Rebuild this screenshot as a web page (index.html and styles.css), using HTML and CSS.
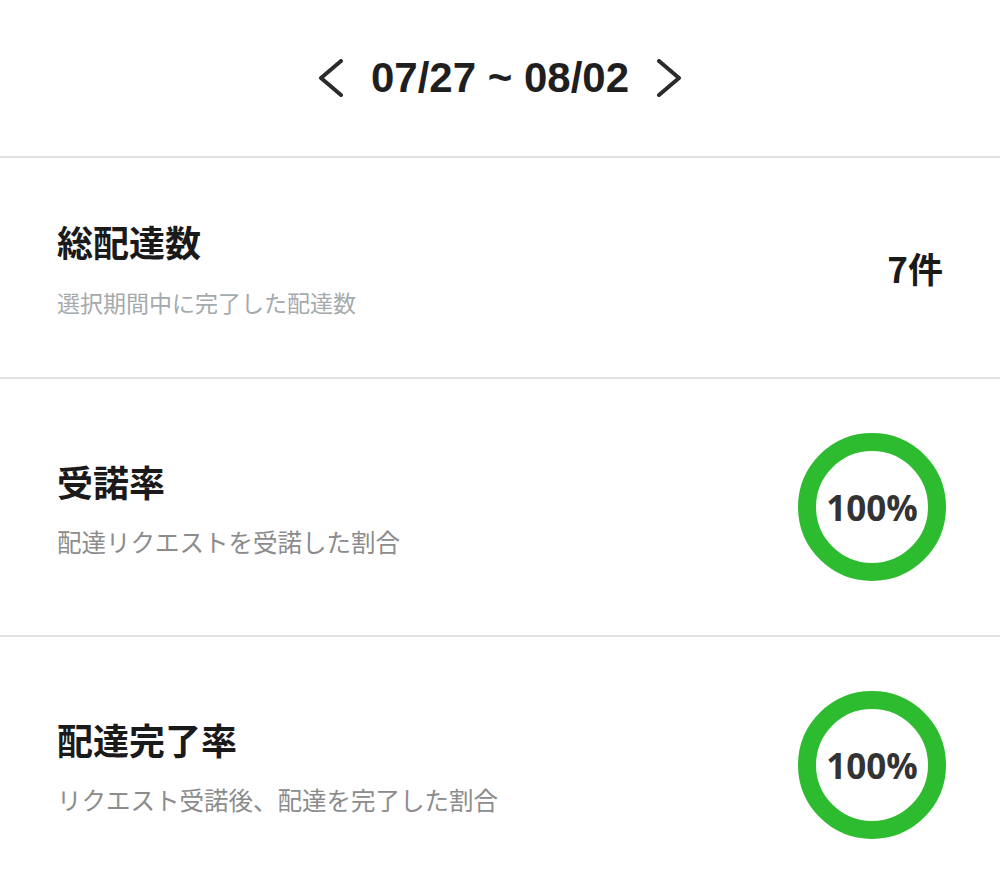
FILE: index.html
```html
<!DOCTYPE html>
<html lang="ja">
<head>
<meta charset="utf-8">
<link rel="stylesheet" href="styles.css">
</head>
<body>
<header class="period">
  <svg class="chev" width="26" height="38" viewBox="0 0 26 38"><polyline points="23,2 3,19 23,36" fill="none" stroke="#2b2b2b" stroke-width="4" stroke-linecap="round" stroke-linejoin="round"/></svg>
  <span class="range">07/27 ~ 08/02</span>
  <svg class="chev" width="26" height="38" viewBox="0 0 26 38"><polyline points="3,2 23,19 3,36" fill="none" stroke="#2b2b2b" stroke-width="4" stroke-linecap="round" stroke-linejoin="round"/></svg>
</header>
<section class="row row-first">
  <div class="text">
    <div class="title">総配達数</div>
    <div class="sub sub-light">選択期間中に完了した配達数</div>
  </div>
  <div class="count">7件</div>
</section>
<section class="row row-ring">
  <div class="text">
    <div class="title">受諾率</div>
    <div class="sub">配達リクエストを受諾した割合</div>
  </div>
  <div class="ring">100%</div>
</section>
<section class="row row-ring row-last">
  <div class="text">
    <div class="title">配達完了率</div>
    <div class="sub">リクエスト受諾後、配達を完了した割合</div>
  </div>
  <div class="ring">100%</div>
</section>
</body>
</html>
```
FILE: styles.css
```css
html, body {
  margin: 0;
  padding: 0;
  background: #ffffff;
}
body {
  font-family: "Noto Sans CJK JP", "Noto Sans", sans-serif;
  color: #1a1a1a;
}
.period {
  height: 156px;
  display: flex;
  align-items: center;
  justify-content: center;
  gap: 27px;
  border-bottom: 2px solid #e2e2e2;
}
.chev {
  display: block;
}
.range {
  font-family: "Liberation Sans", Arial, sans-serif;
  font-weight: 700;
  font-size: 42px;
  color: #1f1f1f;
  line-height: 1;
}
.row {
  display: flex;
  align-items: center;
  justify-content: space-between;
  padding: 0 54px 0 57px;
  border-bottom: 2px solid #e2e2e2;
}
.row-first {
  height: 219px;
}
.row-ring {
  height: 256px;
}
.row-last {
  border-bottom: none;
}
.title {
  font-size: 36px;
  font-weight: 700;
  line-height: 50px;
  color: #1a1a1a;
}
.sub {
  margin-top: 19px;
  font-size: 24.5px;
  line-height: 34px;
  color: #8c8c8c;
}
.sub-light {
  font-size: 23px;
  color: #a4aaad;
}
.count {
  margin-right: 3px;
  font-size: 35px;
  font-weight: 700;
  color: #1a1a1a;
}
.ring {
  width: 148px;
  height: 148px;
  box-sizing: border-box;
  border: 18px solid #2dbc2f;
  border-radius: 50%;
  display: flex;
  align-items: center;
  justify-content: center;
  font-family: "Open Sans", sans-serif;
  font-weight: 700;
  font-size: 35px;
  color: #333333;
}
```
